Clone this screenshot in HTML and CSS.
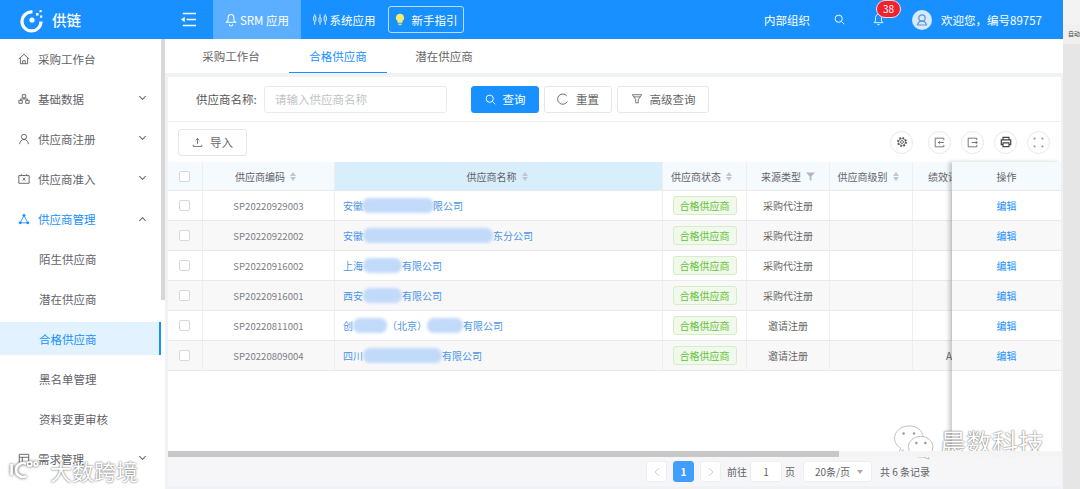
FILE: index.html
```html
<!DOCTYPE html>
<html lang="zh">
<head>
<meta charset="utf-8">
<title>合格供应商</title>
<link rel="stylesheet" href="styles.css">
</head>
<body>
<div class="app">
<header class="topbar">
  <div class="logo">
    <svg class="logo-mark" viewBox="0 0 26 26" width="26" height="26"><path d="M14.500 5A9.500 9.500 0 1 0 23 14.500" fill="none" stroke="#fff" stroke-width="3.200"/><circle cx="14" cy="13" r="2.600" fill="#fff"/><rect x="18" y="6" width="2.600" height="2.600" fill="#fff"/><rect x="21.500" y="3" width="2.200" height="2.200" fill="#fff"/><rect x="22" y="8.500" width="2.200" height="2.200" fill="#fff"/></svg>
    <span>供链</span>
  </div>
  <svg class="collapse" viewBox="0 0 18 16" width="17" height="15"><path d="M3 1.500H17M7 8H17M3 14.500H17" stroke="#fff" stroke-width="1.600" fill="none"/><path d="M5 5 1 8l4 3z" fill="#fff"/></svg>
  <a class="nav nav-active">
    <svg viewBox="0 0 14 16" width="12" height="14"><path d="M7 1.500c2.400 0 3.400 2 3.400 4.200v2.600l2 2.400H1.600l2-2.400V5.700C3.600 3.500 4.600 1.500 7 1.500zM5 13a2 2 0 0 0 4 0" fill="none" stroke="#fff" stroke-width="1.200"/></svg>
    SRM 应用
  </a>
  <a class="nav">
    <svg viewBox="0 0 16 14" width="14" height="13"><path d="M2 1v12M8 1v12M14 1v12" stroke="#fff" stroke-width="1"/><rect x="0.800" y="3" width="2.400" height="6" rx="1" fill="#1890ff" stroke="#fff"/><rect x="6.800" y="5" width="2.400" height="5" rx="1" fill="#1890ff" stroke="#fff"/><rect x="12.800" y="3" width="2.400" height="6" rx="1" fill="#1890ff" stroke="#fff"/></svg>
    系统应用
  </a>
  <a class="guide">
    <svg viewBox="0 0 12 16" width="10" height="13"><path d="M6 1a5 5 0 0 1 3 9v2H3v-2a5 5 0 0 1 3-9z" fill="#f5ec6e"/><rect x="4" y="13" width="4" height="2" fill="#b6e6c8"/></svg>
    新手指引
  </a>
  <div class="top-right">
    <span class="org">内部组织</span>
    <svg class="top-search" viewBox="0 0 14 14" width="11" height="11"><circle cx="6" cy="6" r="4.600" fill="none" stroke="#fff" stroke-width="1.200"/><path d="M9.500 9.500 13 13" stroke="#fff" stroke-width="1.200"/></svg>
    <span class="bell">
      <svg viewBox="0 0 14 16" width="11" height="13"><path d="M7 1.500c2.600 0 3.800 2 3.800 4.200v4l1.700 2.300h-11l1.700-2.300v-4C3.200 3.500 4.400 1.500 7 1.500zM5.500 14.500h3" fill="none" stroke="#fff" stroke-width="1.100"/></svg>
      <b class="badge">38</b>
    </span>
    <span class="avatar">
      <svg viewBox="0 0 20 20" width="20" height="20"><circle cx="10" cy="10" r="10" fill="#d6e9fd"/><circle cx="10" cy="8" r="3.200" fill="none" stroke="#5a94d8" stroke-width="1.200"/><path d="M5.500 15c.6-2.600 2.200-3.800 4.500-3.800s3.900 1.200 4.500 3.800z" fill="none" stroke="#5a94d8" stroke-width="1.200"/></svg>
    </span>
    <span class="welcome">欢迎您，编号89757</span>
  </div>
</header>

<div class="shell">
  <aside class="sidebar">
    <nav class="menu">
      <a class="item">
        <svg class="ic" viewBox="0 0 14 14"><path d="M1 7 7 1.500 13 7M2.800 6v6.500h8.400V6M5.500 12.500V9h3v3.500" fill="none" stroke="#555" stroke-width="1"/></svg>
        采购工作台
      </a>
      <a class="item">
        <svg class="ic" viewBox="0 0 14 14"><path d="M5 2h4v3.500H5zM1 8.500h4V12H1zM9 8.500h4V12H9zM7 5.500v1.500M3 8.500V7h8v1.500" fill="none" stroke="#555"/></svg>
        基础数据<i class="chev"></i>
      </a>
      <a class="item">
        <svg class="ic" viewBox="0 0 14 14"><circle cx="7" cy="4.500" r="3" fill="none" stroke="#555"/><path d="M1.800 13c.4-3 2.400-5.500 5.200-5.500s4.800 2.500 5.200 5.500" fill="none" stroke="#555"/></svg>
        供应商注册<i class="chev"></i>
      </a>
      <a class="item">
        <svg class="ic" viewBox="0 0 14 14"><path d="M1 3h12v9H1zM4 1.500V3M10 1.500V3M5.500 5.500 8.500 9M8.500 5.500 5.500 9" fill="none" stroke="#555"/></svg>
        供应商准入<i class="chev"></i>
      </a>
      <a class="item item-open">
        <svg class="ic" viewBox="0 0 14 14"><circle cx="7" cy="3" r="1.700" fill="#1890ff"/><circle cx="2.500" cy="11.500" r="1.700" fill="#1890ff"/><circle cx="11.500" cy="11.500" r="1.700" fill="#1890ff"/><path d="M6.500 4 3 10.500M7.500 4 11 10.500M3 11.500h8" fill="none" stroke="#1890ff"/></svg>
        供应商管理<i class="chev chev-up"></i>
      </a>
      <a class="item sub">陌生供应商</a>
      <a class="item sub">潜在供应商</a>
      <a class="item sub sub-active">合格供应商</a>
      <a class="item sub">黑名单管理</a>
      <a class="item sub">资料变更审核</a>
      <a class="item">
        <svg class="ic" viewBox="0 0 14 14"><path d="M1.500 1.500h11v11h-11zM1.500 5h11M5 5v7.500" fill="none" stroke="#555"/></svg>
        需求管理<i class="chev"></i>
      </a>
    </nav>
    <div class="side-scroll"></div>
  </aside>

  <main class="content">
    <div class="tabs">
      <a class="tab">采购工作台</a>
      <a class="tab tab-active">合格供应商</a>
      <a class="tab">潜在供应商</a>
    </div>

    <section class="panel">
      <form class="search">
        <label class="search-label">供应商名称:</label>
        <span class="input">请输入供应商名称</span>
        <button class="btn btn-primary" type="button">
          <svg viewBox="0 0 14 14" width="11" height="11"><circle cx="6" cy="6" r="4.600" fill="none" stroke="#fff" stroke-width="1.200"/><path d="M9.500 9.500 13 13" stroke="#fff" stroke-width="1.200"/></svg>
          查询
        </button>
        <button class="btn btn-reset" type="button">
          <svg viewBox="0 0 14 14" width="12" height="12"><path d="M11.500 3.500A6 6 0 1 0 12 10" fill="none" stroke="#666" stroke-width="1.100"/></svg>
          重置
        </button>
        <button class="btn btn-adv" type="button">
          <svg viewBox="0 0 14 14" width="12" height="12"><path d="M1.500 2h11L8.500 7.500V11.500h-3V7.500zM3 4.500h8" fill="none" stroke="#666"/></svg>
          高级查询
        </button>
      </form>

      <div class="toolbar">
        <button class="btn btn-import" type="button">
          <svg viewBox="0 0 14 14" width="11" height="11"><path d="M7 9V2M4.500 4.300 7 1.800l2.500 2.500M1.500 10v2h11v-2" fill="none" stroke="#555"/></svg>
          导入
        </button>
        <div class="tools">
          <span class="tool tool-first"><svg viewBox="0 0 14 14" width="12" height="12"><circle cx="7" cy="7" r="4.800" fill="none" stroke="#555" stroke-width="2" stroke-dasharray="1.900 1.870"/><circle cx="7" cy="7" r="4" fill="none" stroke="#555" stroke-width=".8"/><circle cx="7" cy="7" r="1.700" fill="none" stroke="#555"/></svg></span>
          <span class="tool"><svg viewBox="0 0 14 14" width="11" height="11"><path d="M12.500 4V1.500h-11v11h11V10M12.500 7H5.500M7.500 5 5.500 7l2 2" fill="none" stroke="#555"/></svg></span>
          <span class="tool"><svg viewBox="0 0 14 14" width="11" height="11"><path d="M12.500 4V1.500h-11v11h11V10M6 7h7M11 5l2 2-2 2" fill="none" stroke="#555"/></svg></span>
          <span class="tool"><svg viewBox="0 0 14 14" width="12" height="12"><path d="M3.500 4.500v-3h7v3M3.500 10h-2V4.500h11V10h-2M3.500 8h7v4.500h-7z" fill="none" stroke="#444" stroke-width="1.400"/></svg></span>
          <span class="tool"><svg viewBox="0 0 14 14" width="11" height="11"><path d="M1.500 3.500v-2h2M10.500 1.500h2v2M12.500 10.500v2h-2M3.500 12.500h-2v-2" fill="none" stroke="#666"/></svg></span>
        </div>
      </div>

      <div class="table-wrap">
        <div class="table-body">
          <div class="grid">
            <div class="th check-cell"><i class="checkbox"></i></div>
            <div class="th th-pad">供应商编码<i class="sort"></i></div>
            <div class="th th-sorted">供应商名称<i class="sort"></i></div>
            <div class="th th-pad">供应商状态<i class="sort"></i></div>
            <div class="th">来源类型<svg class="th-filter" viewBox="0 0 10 10" width="9" height="9"><path d="M0 .5h10L6 5v5L4 8.500V5z" fill="#b4b8bf"/></svg></div>
            <div class="th th-pad">供应商级别<i class="sort"></i></div>
            <div class="th th-clip"><span>绩效评级</span></div>

            <div class="td check-cell"><i class="checkbox"></i></div>
            <div class="td code">SP20220929003</div>
            <div class="td td-name"><a>安徽<i class="blot w72"></i><span class="after">限公司</span></a></div>
            <div class="td"><span class="tag">合格供应商</span></div>
            <div class="td">采购代注册</div>
            <div class="td"></div>
            <div class="td"></div>

            <div class="td alt check-cell"><i class="checkbox"></i></div>
            <div class="td alt code">SP20220922002</div>
            <div class="td alt td-name"><a>安徽<i class="blot w132"></i><span class="after">东分公司</span></a></div>
            <div class="td alt"><span class="tag">合格供应商</span></div>
            <div class="td alt">采购代注册</div>
            <div class="td alt"></div>
            <div class="td alt"></div>

            <div class="td check-cell"><i class="checkbox"></i></div>
            <div class="td code">SP20220916002</div>
            <div class="td td-name"><a>上海<i class="blot w39"></i><span class="after">有限公司</span></a></div>
            <div class="td"><span class="tag">合格供应商</span></div>
            <div class="td">采购代注册</div>
            <div class="td"></div>
            <div class="td"></div>

            <div class="td alt check-cell"><i class="checkbox"></i></div>
            <div class="td alt code">SP20220916001</div>
            <div class="td alt td-name"><a>西安<i class="blot w39"></i><span class="after">有限公司</span></a></div>
            <div class="td alt"><span class="tag">合格供应商</span></div>
            <div class="td alt">采购代注册</div>
            <div class="td alt"></div>
            <div class="td alt"></div>

            <div class="td check-cell"><i class="checkbox"></i></div>
            <div class="td code">SP20220811001</div>
            <div class="td td-name"><a>创<i class="blot w32"></i><span class="after">（北京）</span><i class="blot w38"></i><span class="after">有限公司</span></a></div>
            <div class="td"><span class="tag">合格供应商</span></div>
            <div class="td">邀请注册</div>
            <div class="td"></div>
            <div class="td"></div>

            <div class="td alt check-cell"><i class="checkbox"></i></div>
            <div class="td alt code">SP20220809004</div>
            <div class="td alt td-name"><a>四川<i class="blot w90"></i><span class="after">有限公司</span></a></div>
            <div class="td alt"><span class="tag">合格供应商</span></div>
            <div class="td alt">邀请注册</div>
            <div class="td alt"></div>
            <div class="td alt td-a">A</div>
          </div>
          <div class="fixed-col">
            <div class="th">操作</div>
            <div class="td"><a class="link">编辑</a></div>
            <div class="td alt"><a class="link">编辑</a></div>
            <div class="td"><a class="link">编辑</a></div>
            <div class="td alt"><a class="link">编辑</a></div>
            <div class="td"><a class="link">编辑</a></div>
            <div class="td alt"><a class="link">编辑</a></div>
          </div>
        </div>
        <div class="hscroll"><div class="hthumb"></div></div>
      </div>

      <div class="pager">
        <span class="pg-btn"><svg viewBox="0 0 8 12" width="6" height="10"><path d="M6.500 1 1.500 6l5 5" fill="none" stroke="#bbb"/></svg></span>
        <span class="pg-btn pg-current">1</span>
        <span class="pg-btn"><svg viewBox="0 0 8 12" width="6" height="10"><path d="M1.500 1l5 5-5 5" fill="none" stroke="#bbb"/></svg></span>
        <span class="pg-text">前往</span>
        <span class="pg-input">1</span>
        <span class="pg-text">页</span>
        <span class="pg-size">20条/页<i class="caret"></i></span>
        <span class="pg-text">共 6 条记录</span>
      </div>
    </section>
  </main>
</div>
</div>

<aside class="strip">
  <div class="strip-top"></div>
  <div class="strip-tab">自动</div>
</aside>

<div class="mark mark-left">
  <svg viewBox="0 0 44 24" width="38" height="22"><path d="M3 5v13M20 5a8 8 0 1 0 0 14" fill="none" stroke="#fff" stroke-width="3"/><circle cx="24" cy="5" r="2.500" fill="none" stroke="#fff" stroke-width="2"/><circle cx="31" cy="5" r="2" fill="none" stroke="#fff" stroke-width="2"/></svg>
  <span>大数跨境</span>
</div>
<div class="mark mark-right">
  <svg viewBox="0 0 44 38" width="42" height="36"><path d="M17 2C8 2 1.500 8 1.500 15c0 4.500 2.500 8 6.500 10.500L6 30l5.500-3" fill="#fff" stroke="#bbb"/><path d="M17 2c8 0 14 5 15 12" fill="none" stroke="#bbb"/><ellipse cx="29" cy="24" rx="13" ry="11" fill="#fff" stroke="#bbb"/><path d="M36 33l2 4-6-2" fill="#fff" stroke="#bbb"/><circle cx="11" cy="10" r="1.300" fill="#999"/><circle cx="22" cy="10" r="1.300" fill="#999"/><circle cx="24.500" cy="20" r="1.300" fill="#999"/><circle cx="34" cy="20" r="1.300" fill="#999"/></svg>
  <span>晨数科技</span>
</div>
</body>
</html>
```
FILE: styles.css
```css
* { box-sizing: border-box; }
html, body { margin: 0; height: 489px; overflow: hidden; }
body {
  width: 1080px;
  position: relative;
  display: flex;
  font-family: "Noto Sans CJK SC", "Noto Sans", sans-serif;
  font-size: 11.5px;
  color: #606266;
  background: #e6e6e6;
}
a { display: block; }
i { display: inline-block; font-style: normal; }
button { font-family: inherit; cursor: default; }

.app { width: 1063px; flex: none; background: #f0f2f5; }

/* top bar */
.topbar {
  height: 39px;
  background: #1890ff;
  display: flex;
  align-items: center;
  color: #fff;
}
.logo { width: 174px; display: flex; align-items: center; padding-left: 18px; gap: 8px; font-size: 14.500px; font-weight: 500; }
.logo-mark { flex: none; }
.collapse { margin-left: 6px; flex: none; }
.nav {
  height: 39px;
  width: 86px;
  display: flex;
  align-items: center;
  justify-content: center;
  gap: 3px;
}
.nav-active { background: #5cafff; margin-left: 16px; width: 88px; }
.guide {
  width: 76px;
  height: 27px;
  margin-left: 1px;
  border: 1px solid #b9dcff;
  border-radius: 3px;
  display: flex;
  align-items: center;
  justify-content: center;
  gap: 7px;
  font-size: 11.500px;
}
.top-right { margin-left: auto; margin-right: 21px; display: flex; align-items: center; height: 39px; }
.top-search { margin-left: 24px; }
.bell { position: relative; margin-left: 28px; display: flex; }
.badge {
  position: absolute;
  left: 3px;
  top: -13px;
  width: 25px;
  height: 18px;
  border-radius: 9px;
  background: #ee2330;
  border: 1px solid #ffd7d7;
  font-size: 10px;
  font-weight: 400;
  text-align: center;
  line-height: 15px;
}
.avatar { margin-left: 28px; display: flex; }
.welcome { margin-left: 9px; white-space: nowrap; }

/* shell */
.shell { display: flex; height: 450px; }

/* sidebar */
.sidebar { width: 165px; flex: none; background: #fff; position: relative; overflow: hidden; }
.menu { width: 161px; }
.side-scroll { position: absolute; left: 161px; top: 0; width: 4px; height: 261px; background: #d8d8d8; }
.item {
  height: 40px;
  display: flex;
  align-items: center;
  padding-left: 18px;
  gap: 8px;
  color: #5f6368;
  position: relative;
}
.ic { width: 12px; height: 12px; flex: none; }
.chev {
  position: absolute;
  right: 16px;
  top: 15px;
  width: 5px;
  height: 5px;
  border-right: 1px solid #666;
  border-bottom: 1px solid #666;
  transform: rotate(45deg);
}
.chev-up { transform: rotate(225deg); top: 19px; }
.item-open { color: #1890ff; }
.sub { padding-left: 39px; }
.sub-active {
  background: #e2f3ff;
  color: #1890ff;
  border-right: 2px solid #1890ff;
  height: 33px;
  margin: 3px 0 4px;
}

/* content */
.content { width: 898px; flex: none; display: flex; flex-direction: column; }
.tabs { height: 34px; background: #fff; display: flex; padding-left: 17px; flex: none; }
.tab { width: 98px; line-height: 34px; text-align: center; color: #666; }
.tab + .tab { margin-left: 9px; }
.tab-active { color: #1890ff; border-bottom: 1px solid #1890ff; margin-right: -1px; }
.panel {
  margin: 4px 2px 3px 3px;
  flex: 1;
  background: #fff;
  display: flex;
  flex-direction: column;
  min-height: 0;
}

/* search */
.search { height: 45px; flex: none; display: flex; align-items: center; padding-left: 28px; border-bottom: 1px solid #f0f0f0; }
.search-label { color: #555; width: 68px; }
.input {
  width: 183px;
  height: 27px;
  border: 1px solid #e8eaee;
  border-radius: 3px;
  padding-left: 10px;
  line-height: 25px;
  color: #bfc3c9;
  margin-right: 24px;
}
.btn {
  height: 27px;
  border-radius: 3px;
  border: 1px solid #e4e6ea;
  background: #fff;
  color: #666;
  font-size: 11.500px;
  padding: 0;
  display: inline-flex;
  align-items: center;
  justify-content: center;
  gap: 7px;
}
.btn-primary { background: #1890ff; border-color: #1890ff; color: #fff; width: 68px; margin-right: 5px; }
.btn-reset { width: 68px; margin-right: 5px; }
.btn-adv { width: 92px; }

/* toolbar */
.toolbar { height: 40px; flex: none; display: flex; align-items: center; padding: 0 11px 0 10px; justify-content: space-between; }
.btn-import { width: 69px; }
.tools { display: flex; gap: 10px; }
.tool {
  width: 23px;
  height: 23px;
  border: 1px solid #e8e8e8;
  border-radius: 50%;
  display: flex;
  align-items: center;
  justify-content: center;
}
.tool-first { margin-right: 5px; }

/* table */
.table-wrap { flex: 1; min-height: 0; display: flex; flex-direction: column; position: relative; }
.table-body { flex: 1; min-height: 0; display: flex; }
.grid {
  width: 784px;
  flex: none;
  display: grid;
  grid-template-columns: 35px 132px 328px 84px 83px 83px 39px;
  grid-template-rows: 29px;
  grid-auto-rows: 30px;
  align-content: start;
  overflow: hidden;
}
.th, .td {
  display: flex;
  align-items: center;
  justify-content: center;
  font-size: 10px;
  color: #666;
  border-right: 1px solid #eceef1;
  border-bottom: 1px solid #e8eaec;
  min-width: 0;
  background: #fff;
}
.th { background: #f5fafe; color: #5f6368; gap: 5px; height: 29px; }
.check-cell { padding-right: 2px; }
.th-pad { padding-right: 5px; }
.th-sorted { background: #d9eefb; padding-right: 2px; }
.th-clip { justify-content: flex-start; padding-left: 15px; overflow: hidden; white-space: nowrap; border-right: 0; }
.alt { background: #f8f8f9; }
.code { font-size: 9.600px; color: #7c7f84; }
.td-name { justify-content: flex-start; padding-left: 8px; color: #4a95e8; white-space: nowrap; }
.td-name a { display: flex; align-items: center; }
.after { position: relative; }
.td-a { justify-content: flex-start; padding-left: 33px; border-right: 0; }
.blot {
  height: 15px;
  background: #c2daf9;
  border-radius: 7px;
  filter: blur(1.500px);
}
.w72 { width: 72px; margin: 0 -1px; }
.w132 { width: 130px; }
.w39 { width: 39px; }
.w32 { width: 34px; }
.w38 { width: 36px; }
.w90 { width: 79px; }
.checkbox { width: 11px; height: 11px; border: 1px solid #d6d8dc; border-radius: 2px; background: #fff; }
.sort { width: 7px; height: 9px; position: relative; }
.sort::before, .sort::after {
  content: "";
  position: absolute;
  left: 0;
  border-left: 3.500px solid transparent;
  border-right: 3.500px solid transparent;
}
.sort::before { top: 0; border-bottom: 4px solid #c2c6cc; }
.sort::after { bottom: 0; border-top: 4px solid #c2c6cc; }
.tag {
  width: 64px;
  height: 19px;
  line-height: 17px;
  text-align: center;
  color: #67c23a;
  background: #f0f9eb;
  border: 1px solid #d5eec5;
  border-radius: 3px;
  font-size: 10px;
}
.fixed-col {
  flex: 1;
  display: grid;
  grid-template-rows: 29px repeat(6, 30px);
  align-content: start;
  box-shadow: -3px 0 4px rgba(0, 0, 0, 0.2);
  background: #fff;
  position: relative;
}
.fixed-col .td, .fixed-col .th { border-right: 0; }
.link { color: #1890ff; }
.hscroll { height: 6px; flex: none; background: #f4f4f4; position: relative; z-index: 1; }
.hthumb { width: 671px; height: 6px; background: #c8c8c8; }

/* pager */
.pager {
  height: 29px;
  flex: none;
  background: #f6f6f8;
  display: flex;
  align-items: center;
  padding-left: 478px;
  font-size: 10px;
  color: #606266;
}
.pg-btn {
  width: 21px;
  height: 21px;
  background: #fff;
  border: 1px solid #eceef1;
  border-radius: 3px;
  display: flex;
  align-items: center;
  justify-content: center;
  margin-right: 6px;
}
.pg-current { background: #409eff; border-color: #409eff; color: #fff; font-weight: 700; }
.pg-input {
  width: 32px;
  height: 21px;
  background: #fff;
  border: 1px solid #eceef1;
  border-radius: 3px;
  text-align: center;
  line-height: 19px;
  margin: 0 3px;
}
.pg-size {
  width: 69px;
  height: 21px;
  background: #fff;
  border: 1px solid #eceef1;
  border-radius: 3px;
  margin: 0 8px 0 8px;
  display: flex;
  align-items: center;
  padding-left: 11px;
  position: relative;
}
.caret {
  position: absolute;
  right: 8px;
  top: 8px;
  border-left: 3.500px solid transparent;
  border-right: 3.500px solid transparent;
  border-top: 4px solid #aaa;
}

/* right strip */
.strip { flex: 1; background: #e6e6e6; }
.strip-top { height: 24px; background: #f3f3f3; }
.strip-tab {
  height: 20px;
  background: #f1f0ee;
  font-size: 6px;
  line-height: 20px;
  padding-left: 5px;
  color: #444;
  white-space: nowrap;
  overflow: hidden;
}

/* watermarks */
.mark { position: absolute; display: flex; align-items: center; pointer-events: none; }
.mark-left {
  left: 9px;
  bottom: 3px;
  gap: 3px;
  font-size: 22px;
  color: #fff;
  text-shadow: 0 0 2px rgba(0,0,0,.75);
}
.mark-left svg { filter: drop-shadow(0 0 1.500px rgba(0,0,0,.7)); }
.mark-right {
  left: 893px;
  top: 423px;
  gap: 5px;
  font-size: 26px;
  color: #fff;
  text-shadow: 0 0 1.500px rgba(0,0,0,.85);
}
```
